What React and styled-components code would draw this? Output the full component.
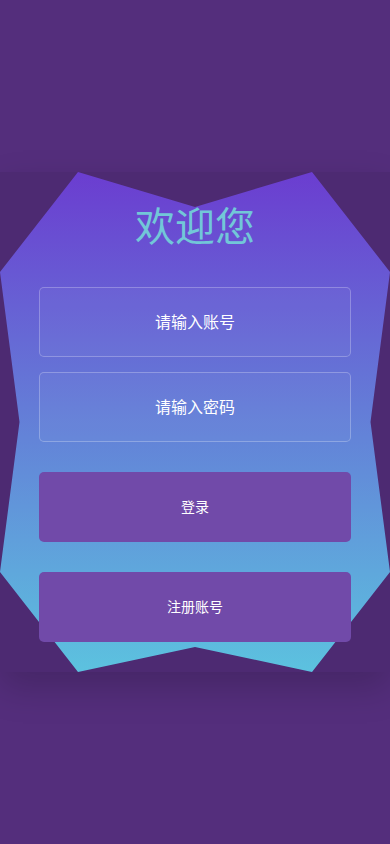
import React from "react";
import styled, { createGlobalStyle } from "styled-components";

const GlobalStyle = createGlobalStyle`
  * { box-sizing: border-box; }
  html, body {
    margin: 0;
    padding: 0;
    background: #542e7c;
    font-family: "Noto Sans CJK SC", "Noto Sans", sans-serif;
  }
`;

export default function App() {
  return (
    <>
      <GlobalStyle />
      <Page>
        <Card>
          <Title>欢迎您</Title>
          <Field type="text" placeholder="请输入账号" />
          <Field type="password" placeholder="请输入密码" />
          <Actions>
            <Button>登录</Button>
            <Button>注册账号</Button>
          </Actions>
        </Card>
      </Page>
    </>
  );
}

const Page = styled.main`
  min-height: 100vh;
  display: flex;
  align-items: center;
  justify-content: center;
`;

// the card box carries the shadow, the gradient shape sits behind the content
const Card = styled.section`
  position: relative;
  isolation: isolate;
  width: 100%;
  height: 500px;
  padding-top: 28px;
  display: flex;
  flex-direction: column;
  align-items: center;
  background: rgba(0, 0, 0, 0.08);
  box-shadow: 0 15px 35px rgba(0, 0, 0, 0.18);

  &::before {
    content: "";
    position: absolute;
    inset: 0;
    z-index: -1;
    background: linear-gradient(to bottom, #6b3dd0, #5cc2df);
    clip-path: polygon(
      20% 0%, 50% 7%, 80% 0%, 100% 20%, 95% 50%, 100% 80%,
      80% 100%, 50% 95%, 20% 100%, 0% 80%, 5% 50%, 0% 20%
    );
  }
`;

const Title = styled.h1`
  margin: 0 0 39px;
  height: 48px;
  font-size: 40px;
  line-height: 48px;
  font-weight: 400;
  color: #72c7d8;
`;

const Field = styled.input`
  width: 80%;
  height: 70px;
  margin-bottom: 15px;
  padding: 0 0 2px;
  border: 1px solid rgba(255, 255, 255, 0.25);
  border-radius: 5px;
  background: rgba(255, 255, 255, 0.03);
  outline: none;
  font-family: inherit;
  font-size: 16px;
  color: #fff;
  text-align: center;

  &::placeholder {
    color: #fff;
    opacity: 1;
  }
`;

const Actions = styled.div`
  width: 80%;
  margin-top: 15px;
  display: flex;
  flex-direction: column;
  gap: 30px;
`;

const Button = styled.button`
  height: 70px;
  padding: 0 0 3px;
  border: none;
  border-radius: 5px;
  background: #714aa9;
  font-family: inherit;
  font-size: 14px;
  color: #fff;
  cursor: pointer;
`;
